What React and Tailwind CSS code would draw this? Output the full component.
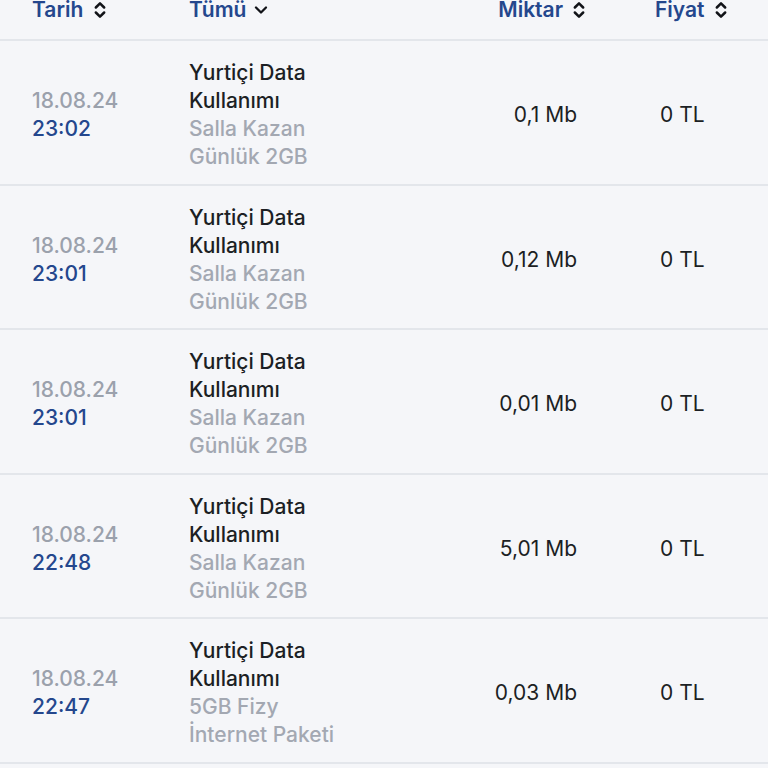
import React from 'react';
import { ChevronsUpDown, ChevronDown } from 'lucide-react';

const rows = [
  { date: '18.08.24', time: '23:02', title: ['Yurtiçi Data', 'Kullanımı'], sub: ['Salla Kazan', 'Günlük 2GB'], amount: '0,1 Mb', price: '0 TL' },
  { date: '18.08.24', time: '23:01', title: ['Yurtiçi Data', 'Kullanımı'], sub: ['Salla Kazan', 'Günlük 2GB'], amount: '0,12 Mb', price: '0 TL' },
  { date: '18.08.24', time: '23:01', title: ['Yurtiçi Data', 'Kullanımı'], sub: ['Salla Kazan', 'Günlük 2GB'], amount: '0,01 Mb', price: '0 TL' },
  { date: '18.08.24', time: '22:48', title: ['Yurtiçi Data', 'Kullanımı'], sub: ['Salla Kazan', 'Günlük 2GB'], amount: '5,01 Mb', price: '0 TL' },
  { date: '18.08.24', time: '22:47', title: ['Yurtiçi Data', 'Kullanımı'], sub: ['5GB Fizy', 'İnternet Paketi'], amount: '0,03 Mb', price: '0 TL' },
];

export default function App() {
  return (
    <div className="w-[768px] h-[768px] overflow-hidden bg-[#f5f6f9] text-[21px] leading-[28px]" style={{ fontFamily: 'Inter, "Noto Sans", sans-serif' }}>
      {/* Header */}
      <div className="flex items-start h-[41px] border-b-2 border-[#e3e6eb] text-[#24478d] font-semibold">
        <div className="w-[189px] pl-[32px] flex items-center gap-[7px] h-[20px]">
          <span>Tarih</span>
          <ChevronsUpDown size={20} strokeWidth={3} className="text-[#111318]" />
        </div>
        <div className="w-[260px] flex items-center gap-[5px] h-[20px]">
          <span>Tümü</span>
          <ChevronDown size={20} strokeWidth={2.75} className="text-[#111318]" />
        </div>
        <div className="w-[140px] flex items-center justify-end gap-[6px] h-[20px]">
          <span>Miktar</span>
          <ChevronsUpDown size={20} strokeWidth={3} className="text-[#111318]" />
        </div>
        <div className="pl-[66px] flex items-center gap-[6px] h-[20px]">
          <span>Fiyat</span>
          <ChevronsUpDown size={20} strokeWidth={3} className="text-[#111318]" />
        </div>
      </div>

      {/* Rows */}
      {rows.map((r, i) => (
        <div key={i} className="flex items-center h-[144.5px] pt-[6px] border-b-2 border-[#e3e6eb]">
          <div className="w-[189px] pl-[32px] font-medium">
            <p className="text-[#9ba1ac]">{r.date}</p>
            <p className="text-[#24478d]">{r.time}</p>
          </div>
          <div className="w-[260px] font-medium">
            <p className="text-[#1c1f24]">{r.title[0]}</p>
            <p className="text-[#1c1f24]">{r.title[1]}</p>
            <p className="text-[#a3a8b2]">{r.sub[0]}</p>
            <p className="text-[#a3a8b2]">{r.sub[1]}</p>
          </div>
          <div className="w-[128px] text-right text-[#1c1f24]">{r.amount}</div>
          <div className="pl-[83px] text-[#1c1f24]">{r.price}</div>
        </div>
      ))}
    </div>
  );
}
